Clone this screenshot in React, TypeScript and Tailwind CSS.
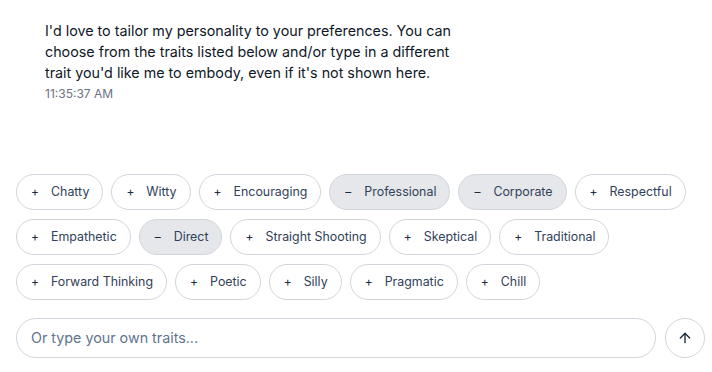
import { ArrowUp } from 'lucide-react'

const traits: { label: string; on?: boolean }[][] = [
    [
        { label: 'Chatty' },
        { label: 'Witty' },
        { label: 'Encouraging' },
        { label: 'Professional', on: true },
        { label: 'Corporate', on: true },
        { label: 'Respectful' },
    ],
    [
        { label: 'Empathetic' },
        { label: 'Direct', on: true },
        { label: 'Straight Shooting' },
        { label: 'Skeptical' },
        { label: 'Traditional' },
    ],
    [
        { label: 'Forward Thinking' },
        { label: 'Poetic' },
        { label: 'Silly' },
        { label: 'Pragmatic' },
        { label: 'Chill' },
    ],
]

function Chip({ label, on }: { label: string; on?: boolean }) {
    return (
        <button
            className={
                on
                    ? 'h-9 flex items-center gap-3 pl-[14px] pr-[13px] rounded-full border border-gray-300 bg-gray-200 text-[12.4px] text-slate-700'
                    : 'h-9 flex items-center gap-3 pl-[14px] pr-[13px] rounded-full border border-gray-300 bg-white text-[12.4px] text-slate-700'
            }
        >
            <span className="w-2 text-center text-[12px] text-slate-800">{on ? '–' : '+'}</span>
            <span>{label}</span>
        </button>
    )
}

export default function App() {
    return (
        <div className="h-[372px] w-[712px] bg-white flex flex-col font-['Inter','Liberation_Sans',sans-serif]">
            {/* assistant message */}
            <div className="pl-[45px] pt-[20px]">
                <p className="text-[14.3px] leading-[21px] text-gray-900 w-[420px]">
                    I'd love to tailor my personality to your preferences. You can choose from the traits listed below and/or type in a
                    different trait you'd like me to embody, even if it's not shown here.
                </p>
                <div className="text-xs text-gray-500 mt-[3px]">11:35:37 AM</div>
            </div>

            <div className="mt-auto pl-4 pr-[7px] pb-[14px]">
                {/* trait chips */}
                <div className="flex flex-col gap-[9px] mb-[18px]">
                    {traits.map((row, i) => (
                        <div key={i} className="flex gap-2">
                            {row.map((t) => (
                                <Chip key={t.label} label={t.label} on={t.on} />
                            ))}
                        </div>
                    ))}
                </div>

                {/* input */}
                <div className="flex items-center gap-[9px]">
                    <div className="flex-1 h-10 rounded-full border border-gray-300 flex items-center pl-[14px]">
                        <span className="text-[14.3px] text-slate-500">Or type your own traits...</span>
                    </div>
                    <button className="w-10 h-10 rounded-full border border-gray-300 flex items-center justify-center text-gray-800">
                        <ArrowUp className="w-4 h-4" strokeWidth={2} />
                    </button>
                </div>
            </div>
        </div>
    )
}
